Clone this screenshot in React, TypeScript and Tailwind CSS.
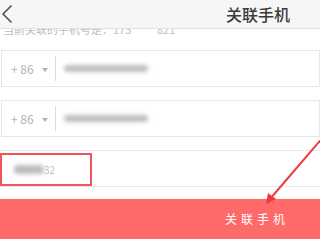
import { ChevronLeft } from 'lucide-react'

const font = { fontFamily: '"Noto Sans CJK SC", "Liberation Sans", sans-serif' }

function PhoneRow() {
  return (
    <div className="ml-[1px] flex h-[37px] items-center border border-[#e6e6e6] bg-white">
      <span className="ml-[9px] text-[12px] text-[#b5b5b5]">+ 86</span>
      <span className="ml-[8px] mt-[2px] h-0 w-0 border-x-[3px] border-t-[4px] border-x-transparent border-t-[#b0b0b0]" />
      <div className="ml-[7px] h-[25px] w-px bg-[#dcdcdc]" />
      <div className="ml-[8px] h-[7px] w-[84px] rounded-sm bg-[#bdbdbd] blur-[2px]" />
    </div>
  )
}

export default function App() {
  return (
    <div className="relative h-[240px] w-[320px] overflow-hidden bg-white" style={font}>
      <div className="relative z-10 flex h-[29px] items-center border-b border-[#e2e2e2] bg-[#f6f6f6]">
        <ChevronLeft className="-ml-[9px] h-[32px] w-[32px] text-[#555]" strokeWidth={1.3} />
        <span className="ml-auto mr-[30px] text-[16px] font-medium text-[#3a3a3a]">关联手机</span>
      </div>
      <div className="h-[7px] overflow-hidden">
        <div className="-mt-[7px] pl-[3px] text-[11px] leading-[14px] text-[#bdbdbd]">当前关联的手机号是：173*****821</div>
      </div>
      <div className="mt-[14px] flex flex-col gap-[13px]">
        <PhoneRow />
        <PhoneRow />
      </div>
      <div className="mt-[13px] flex h-[37px] items-end border-y border-[#e6e6e6]">
        <div className="flex h-[33px] w-[92px] items-center border-2 border-[#f2545b]">
          <div className="ml-[12px] h-[9px] w-[30px] rounded-sm bg-[#bcbcbc] blur-[2px]" />
          <span className="text-[10px] text-[#bbb] blur-[0.5px]">32</span>
        </div>
      </div>
      <div className="mt-[12px] flex h-[40px] items-center justify-end bg-[#fe6a6a] pr-[31px]">
        <span className="text-[12px] tracking-[4px] text-white">关联手机</span>
      </div>
      <svg className="pointer-events-none absolute left-0 top-0" width="320" height="240">
        <line x1="324" y1="136" x2="270" y2="199" stroke="#f0393f" strokeWidth="2" />
        <polygon points="266,204 268,193 276,199" fill="#f0393f" />
      </svg>
    </div>
  )
}
